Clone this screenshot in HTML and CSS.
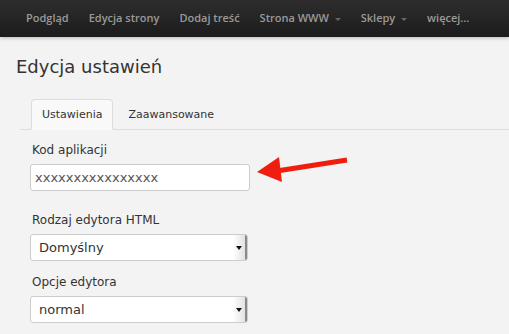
FILE: index.html
```html
<!DOCTYPE html>
<html lang="pl">
<head>
  <meta charset="UTF-8">
  <title>Edycja ustawień</title>
  <link rel="stylesheet" href="styles.css">
</head>
<body>
  <div class="navbar">
    <ul class="nav">
      <li><a href="#">Podgląd</a></li>
      <li><a href="#">Edycja strony</a></li>
      <li><a href="#">Dodaj treść</a></li>
      <li><a href="#">Strona WWW <span class="caret"></span></a></li>
      <li><a href="#">Sklepy <span class="caret"></span></a></li>
      <li><a href="#">więcej...</a></li>
    </ul>
  </div>

  <div class="page">
    <h1>Edycja ustawień</h1>

    <ul class="tabs">
      <li class="active"><a href="#">Ustawienia</a></li>
      <li><a href="#">Zaawansowane</a></li>
    </ul>

    <form class="settings">
      <label for="app-code">Kod aplikacji</label>
      <div class="field-row">
        <input id="app-code" class="input" type="text" value="xxxxxxxxxxxxxxxx">
        <!-- red arrow pointing at the field -->
        <svg class="pointer" width="94" height="36" viewBox="0 0 94 36">
          <path d="M24 16.5 L91 6" stroke="#f01e0e" stroke-width="5" fill="none"/>
          <polygon points="1,18 23,3 26,28" fill="#f01e0e"/>
        </svg>
      </div>

      <label>Rodzaj edytora HTML</label>
      <div class="select">
        <span>Domyślny</span>
        <span class="select-btn"><i></i></span>
      </div>

      <label>Opcje edytora</label>
      <div class="select">
        <span>normal</span>
        <span class="select-btn"><i></i></span>
      </div>
    </form>
  </div>
</body>
</html>
```

FILE: styles.css
```css
body {
  margin: 0;
  font-family: "DejaVu Sans", Verdana, sans-serif;
  background-color: #f3f3f3;
  color: #333;
}

.navbar {
  height: 37px;
  background: linear-gradient(#2d2d2d, #1c1c1c);
  box-shadow: 0 1px 4px rgba(0, 0, 0, 0.25);
}

.nav {
  list-style: none;
  margin: 0;
  padding: 0 0 0 16px;
  display: flex;
  white-space: nowrap;
}

.nav a {
  display: block;
  padding: 0 10px;
  line-height: 35px;
  font-family: "Open Sans", sans-serif;
  font-size: 11px;
  font-weight: 600;
  color: #9a9a9a;
  text-decoration: none;
}

.caret {
  display: inline-block;
  width: 0;
  height: 0;
  margin-left: 3px;
  vertical-align: middle;
  border-top: 3px solid #666;
  border-left: 3px solid transparent;
  border-right: 3px solid transparent;
}

.page {
  padding: 19px 0 0 16px;
}

h1 {
  margin: 0 0 22px;
  font-size: 18px;
  font-weight: normal;
  color: #333;
}

.tabs {
  list-style: none;
  margin: 0 0 0 4px;
  padding: 0 0 0 11px;
  display: flex;
  border-bottom: 1px solid #ddd;
}

.tabs li {
  margin-bottom: -1px;
}

.tabs a {
  display: block;
  padding: 0 10px;
  line-height: 29px;
  font-size: 11px;
  color: #333;
  text-decoration: none;
  border: 1px solid transparent;
  border-radius: 4px 4px 0 0;
}

.tabs li + li a {
  padding-left: 14px;
}

.tabs .active a {
  background-color: #f9f9f9;
  border-color: #ddd #ddd transparent;
}

.settings {
  padding: 11px 0 0 14px;
  display: flex;
  flex-direction: column;
  align-items: flex-start;
}

label {
  font-size: 12px;
  line-height: 18px;
  margin: 0 0 5px 2px;
}

.field-row {
  position: relative;
  margin-bottom: 20px;
}

.input {
  display: block;
  width: 220px;
  height: 27px;
  box-sizing: border-box;
  padding: 0 4px;
  border: 1px solid #ccc;
  border-radius: 3px;
  background: #fff;
  font-family: "DejaVu Sans", Verdana, sans-serif;
  font-size: 13px;
  color: #555;
}

.pointer {
  position: absolute;
  left: 226px;
  top: -10px;
}

.select {
  width: 218px;
  height: 27px;
  box-sizing: border-box;
  border: 1px solid #ccc;
  border-radius: 3px;
  background: #fff;
  display: flex;
  align-items: center;
  justify-content: space-between;
  font-size: 13px;
  color: #333;
  padding-left: 8px;
  margin-bottom: 12px;
  overflow: hidden;
}

.select-btn {
  width: 14px;
  height: 100%;
  display: flex;
  align-items: center;
  justify-content: center;
  background: linear-gradient(to right, #fff, #e2e2e2);
  border-right: 2px solid #8a8a8a;
  box-sizing: border-box;
}

.select-btn i {
  width: 0;
  height: 0;
  border-top: 4px solid #111;
  border-left: 3px solid transparent;
  border-right: 3px solid transparent;
}
```
